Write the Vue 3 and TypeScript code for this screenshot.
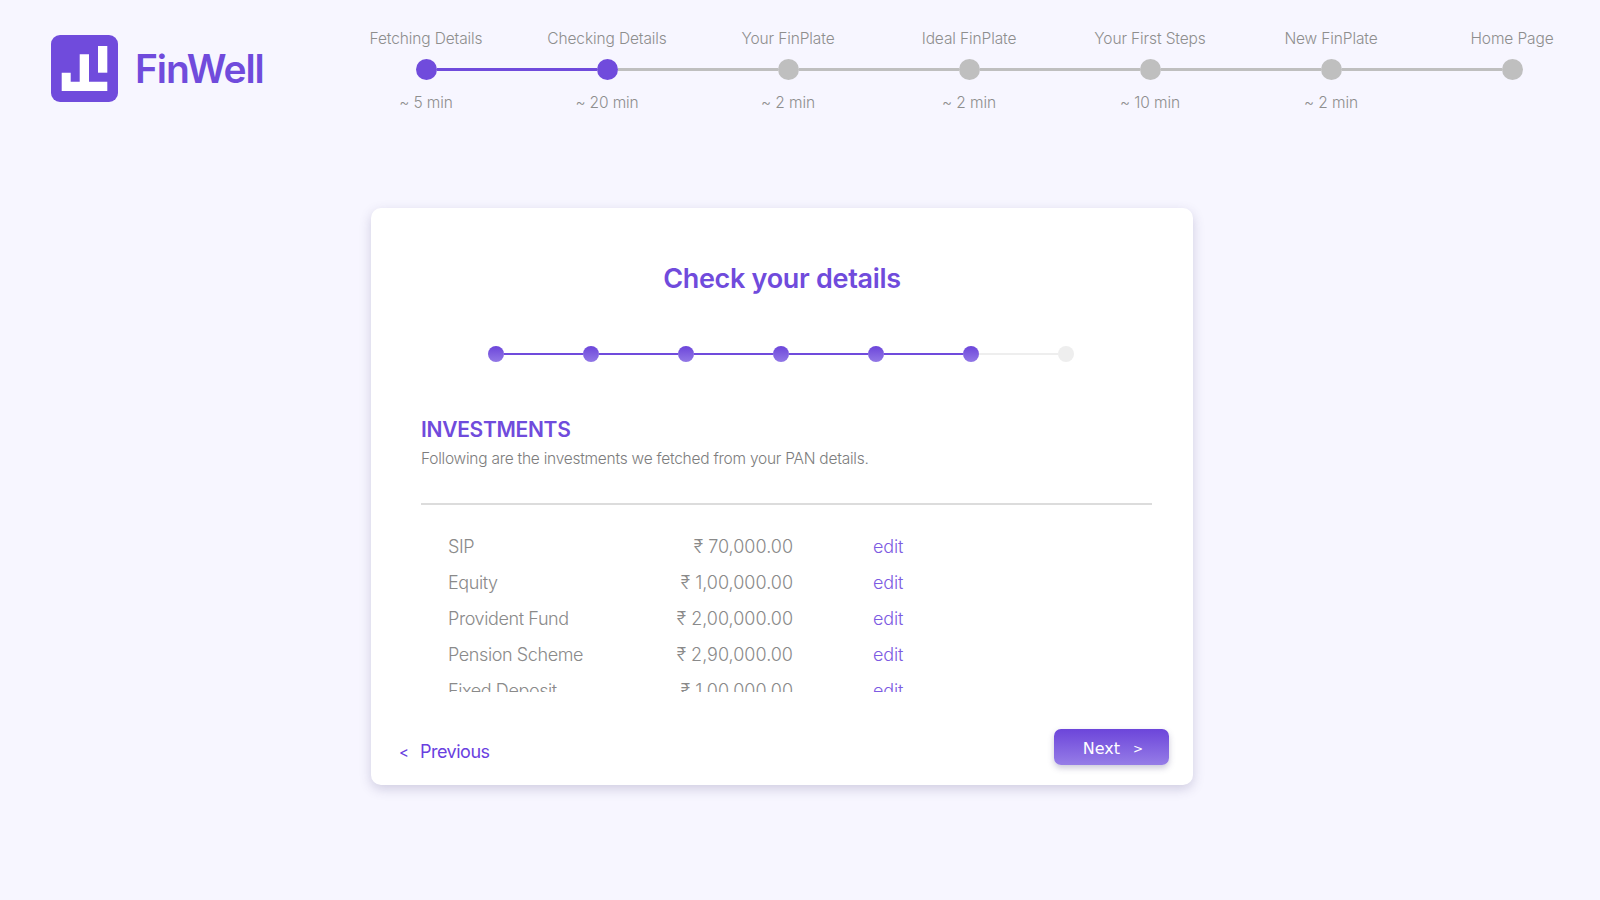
<script setup lang="ts">
const steps = [
  { label: "Fetching Details", time: "~ 5 min" },
  { label: "Checking Details", time: "~ 20 min" },
  { label: "Your FinPlate", time: "~ 2 min" },
  { label: "Ideal FinPlate", time: "~ 2 min" },
  { label: "Your First Steps", time: "~ 10 min" },
  { label: "New FinPlate", time: "~ 2 min" },
  { label: "Home Page", time: "" },
];
const currentStep = 1;

const subSteps = [1, 2, 3, 4, 5, 6, 7];
const currentSub = 6;

const investments = [
  { name: "SIP", amount: "₹ 70,000.00" },
  { name: "Equity", amount: "₹ 1,00,000.00" },
  { name: "Provident Fund", amount: "₹ 2,00,000.00" },
  { name: "Pension Scheme", amount: "₹ 2,90,000.00" },
  { name: "Fixed Deposit", amount: "₹ 1,00,000.00" },
];
</script>

<template>
  <div class="page">
    <header class="header">
      <div class="brand">
        <svg class="logo" width="67" height="67" viewBox="0 0 67 67">
          <rect width="67" height="67" rx="9" fill="#704bdc" />
          <path d="M10.7 37.7H19.7V46.7H28.7V19.3H38V46.7H56.3V56H10.7Z" fill="#fff" />
          <rect x="47" y="11" width="9.3" height="26.7" fill="#fff" />
        </svg>
        <span class="brand-name">FinWell</span>
      </div>
      <ol class="steps">
        <li v-for="(s, i) in steps" :key="s.label" class="step" :class="{ done: i <= currentStep, passed: i < currentStep }">
          <span class="step-label">{{ s.label }}</span>
          <span class="step-dot" :class="{ last: i === steps.length - 1 }"></span>
          <span class="step-time">{{ s.time }}</span>
        </li>
      </ol>
    </header>

    <main class="card">
      <h1 class="title">Check your details</h1>

      <div class="sub-steps">
        <template v-for="n in subSteps" :key="n">
          <span class="sub-dot" :class="{ on: n <= currentSub }"></span>
          <span v-if="n < subSteps.length" class="sub-line" :class="{ on: n < currentSub }"></span>
        </template>
      </div>

      <section class="section">
        <h2 class="section-title">INVESTMENTS</h2>
        <p class="section-sub">Following are the investments we fetched from your PAN details.</p>
        <div class="rule"></div>
        <div class="list">
          <div v-for="row in investments" :key="row.name" class="row">
            <span>{{ row.name }}</span>
            <span class="amount">{{ row.amount }}</span>
            <a class="edit">edit</a>
          </div>
        </div>
      </section>

      <footer class="footer">
        <a class="prev"><span class="chev">&lt;</span>Previous</a>
        <button class="next"><span class="next-text">Next</span><span class="chev-next">&gt;</span></button>
      </footer>
    </main>
  </div>
</template>

<style>
html,
body {
  margin: 0;
  background: #f7f6ff;
  overflow: hidden;
}
</style>

<style scoped>
.page {
  width: 1600px;
  height: 900px;
  background: #f7f6ff;
  font-family: Inter, "Noto Sans", sans-serif;
  overflow: hidden;
}

.header {
  display: flex;
  height: 208px;
  box-sizing: border-box;
  padding-left: 51px;
}
.brand {
  display: flex;
  align-items: center;
  gap: 17px;
  height: 67px;
  margin-top: 35px;
  width: 284.5px;
  flex: none;
}
.logo {
  flex: none;
}
.brand-name {
  font-size: 39px;
  font-weight: 600;
  letter-spacing: -1.1px;
  color: #704bdc;
}

.steps {
  display: grid;
  grid-template-columns: repeat(7, 181px);
  flex: none;
  margin: 27px 0 0;
  padding: 0;
  list-style: none;
  height: 90px;
}
.step {
  display: flex;
  flex-direction: column;
  align-items: center;
  color: #8e8e8e;
  font-size: 15.5px;
  font-weight: 300;
  letter-spacing: -0.12px;
}
.step-label {
  height: 24px;
  line-height: 24px;
  white-space: nowrap;
}
.step-dot {
  position: relative;
  width: 21px;
  height: 21px;
  border-radius: 50%;
  background: #bfbfbf;
  margin-top: 8px;
}
.step-dot::after {
  content: "";
  position: absolute;
  left: 21px;
  top: 9px;
  width: 160px;
  height: 3px;
  background: #bfbfbf;
}
.step-dot.last::after {
  display: none;
}
.done .step-dot {
  background: #704bdc;
}
.passed .step-dot::after {
  background: #704bdc;
}
.step-time {
  height: 24px;
  line-height: 24px;
  margin-top: 11px;
}

.card {
  width: 822px;
  height: 577px;
  box-sizing: border-box;
  margin-left: 371px;
  padding-top: 51px;
  background: #fff;
  border-radius: 10px;
  box-shadow: 0 4px 12px rgba(70, 60, 120, 0.22);
}
.title {
  margin: 0;
  text-align: center;
  font-size: 27px;
  line-height: 40px;
  font-weight: 600;
  letter-spacing: -0.3px;
  color: #704bdc;
}

.sub-steps {
  display: flex;
  align-items: center;
  margin: 47px 0 0 117px;
  height: 16px;
}
.sub-dot {
  width: 16px;
  height: 16px;
  border-radius: 50%;
  background: #eeeeee;
  flex: none;
}
.sub-dot.on {
  background: linear-gradient(180deg, #6c45da 0%, #9278e6 100%);
}
.sub-line {
  width: 79px;
  height: 2px;
  background: #eeeeee;
  flex: none;
}
.sub-line.on {
  background: #704bdc;
}

.section {
  padding: 0 41px 0 50px;
  margin-top: 54px;
}
.section-title {
  margin: 0;
  font-size: 21px;
  line-height: 28px;
  font-weight: 600;
  letter-spacing: -0.3px;
  color: #704bdc;
}
.section-sub {
  margin: 3px 0 0;
  font-size: 15.5px;
  line-height: 24px;
  font-weight: 300;
  letter-spacing: -0.25px;
  color: #7d7d7d;
}
.rule {
  height: 2px;
  margin-top: 32px;
  background: #dcdcdc;
}
.list {
  height: 164px;
  margin-top: 23px;
  overflow: hidden;
}
.row {
  display: grid;
  grid-template-columns: 199px 146px auto;
  height: 36px;
  align-items: center;
  padding-left: 27px;
  font-size: 18px;
  font-weight: 300;
  letter-spacing: -0.4px;
  color: #8a8a8a;
}
.amount {
  text-align: right;
  white-space: nowrap;
  letter-spacing: 0;
}
.edit {
  margin-left: 80px;
  letter-spacing: -0.15px;
  color: #7d5be2;
}

.footer {
  display: flex;
  justify-content: space-between;
  align-items: flex-start;
  margin-top: 37px;
  padding: 0 24px 0 28px;
}
.prev {
  margin-top: 11px;
  font-size: 18px;
  line-height: 24px;
  font-weight: 400;
  letter-spacing: -0.5px;
  color: #6a3fe0;
}
.chev {
  display: inline-block;
  width: 21px;
  font-size: 15px;
}
.next {
  display: flex;
  align-items: center;
  justify-content: center;
  width: 115px;
  height: 36px;
  padding: 3px 0 0 3px;
  box-sizing: border-box;
  border: 0;
  border-radius: 7px;
  background: linear-gradient(180deg, #6c45da 0%, #967de7 100%);
  box-shadow: 0 3px 6px rgba(70, 60, 120, 0.28);
  font-family: "DejaVu Sans", sans-serif;
  font-size: 16px;
  color: #fff;
}
.chev-next {
  margin-left: 13px;
  font-size: 12px;
}
</style>
